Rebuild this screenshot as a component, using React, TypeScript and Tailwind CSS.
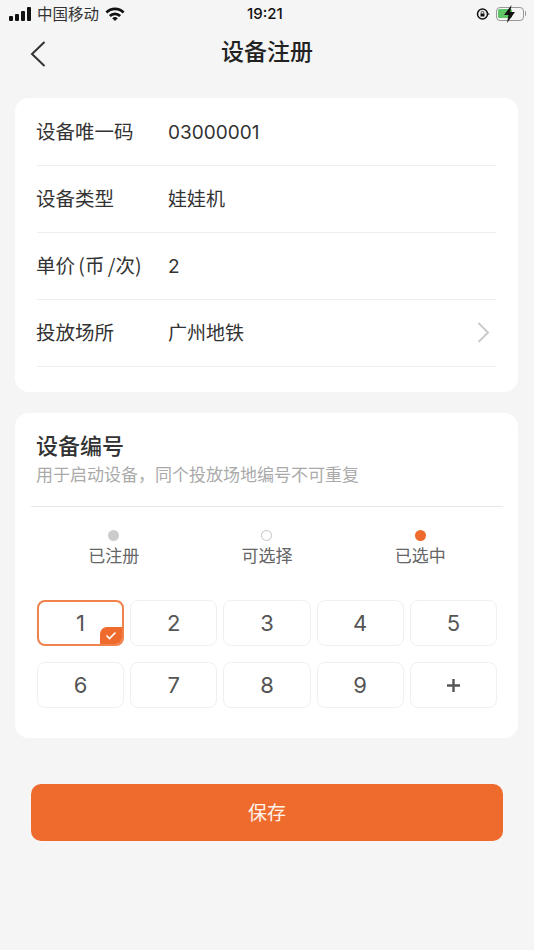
const rows = [
  { label: '设备唯一码', value: '03000001' },
  { label: '设备类型', value: '娃娃机' },
  { label: '单价 (币 /次)', value: '2' },
  { label: '投放场所', value: '广州地铁', arrow: true },
];

const legend = [
  { label: '已注册', dot: 'bg-[#cccccc]' },
  { label: '可选择', dot: 'border border-[#c4c4c4] bg-white' },
  { label: '已选中', dot: 'bg-[#ee6b2d]' },
];

const StatusBar = () => (
  <div className="relative flex h-[27px] items-center pl-[9px] pr-[8px] text-[#222]">
    <div className="flex items-end gap-[2px]">
      <span className="h-[5px] w-[4px] rounded-[1px] bg-[#111]" />
      <span className="h-[7px] w-[4px] rounded-[1px] bg-[#111]" />
      <span className="h-[10px] w-[4px] rounded-[1px] bg-[#111]" />
      <span className="h-[14px] w-[4px] rounded-[1px] bg-[#111]" />
    </div>
    <span className="ml-[6px] text-[15.5px] leading-none text-[#333]">中国移动</span>
    <svg className="ml-[6px]" width="20" height="14" viewBox="0 0 20 14">
      <path d="M0.5 4.5 A13.5 13.5 0 0 1 19.5 4.5 L17.6 6.5 A10.8 10.8 0 0 0 2.4 6.5 Z" fill="#111" />
      <path d="M3.9 8 A8.6 8.6 0 0 1 16.1 8 L14.2 10 A6 6 0 0 0 5.8 10 Z" fill="#111" />
      <path d="M7.2 11.3 A4 4 0 0 1 12.8 11.3 L10 14 Z" fill="#111" />
    </svg>
    <span className="absolute left-[247px] top-[5px] font-['Inter',sans-serif] text-[15px] font-medium leading-[17px] text-[#111]">
      19:21
    </span>
    <div className="ml-auto flex items-center gap-[6px]">
      <svg width="14" height="14" viewBox="0 0 14 14" fill="none">
        <circle cx="6.5" cy="7" r="5" stroke="#111" strokeWidth="1.5" />
        <rect x="4.5" y="6.5" width="4" height="3" fill="#111" />
        <path d="M5.2 6.5 V5.6 a1.3 1.3 0 0 1 2.6 0 V6.5" stroke="#111" strokeWidth="0.8" />
        <path d="M11 5 L14 7.5 H11 Z" fill="#111" />
      </svg>
      <div className="flex items-center">
        <div className="relative h-[14px] w-[28px] rounded-[4px] border border-[#999] p-[1.5px]">
          <div className="h-full w-[14px] rounded-[1.5px] bg-[#5fc465]" />
          <svg className="absolute left-[6px] top-[-3px]" width="13" height="18" viewBox="0 0 13 18">
            <path d="M8.5 0 L1 10 H5.5 L4 18 L12 7 H7.2 Z" fill="#111" />
          </svg>
        </div>
        <span className="ml-[1px] h-[5px] w-[1.5px] rounded-r-sm bg-[#999]" />
      </div>
    </div>
  </div>
);

const NumberCell = ({ n, selected }: { n: number; selected?: boolean }) => (
  <div
    className={`relative flex h-[46px] items-center justify-center overflow-hidden rounded-[8px] bg-white font-['Inter',sans-serif] text-[22px] leading-none text-[#555] ${
      selected ? 'border-2 border-[#f0824c]' : 'border border-[#f0f0f0]'
    }`}
  >
    {n}
    {selected ? (
      <span className="absolute bottom-0 right-0 flex h-[17px] w-[22px] items-center justify-center rounded-tl-[7px] bg-[#ee6b2d]">
        <svg width="12" height="9" viewBox="0 0 12 9" fill="none">
          <path d="M1.5 4.5 L4.5 7.5 L10.5 1.5" stroke="#fff" strokeWidth="1.6" />
        </svg>
      </span>
    ) : null}
  </div>
);

export default function App() {
  return (
    <div className="flex h-[950px] w-[534px] flex-col overflow-hidden bg-[#f5f5f5] font-['Noto_Sans_CJK_SC','Inter',sans-serif]">
      <StatusBar />

      <div className="relative flex h-[54px] items-center justify-center pb-[8px]">
        <svg className="absolute left-[30px] top-[14px]" width="16" height="26" viewBox="0 0 16 26" fill="none">
          <path d="M14.5 1 L2 13 L14.5 25" stroke="#333" strokeWidth="2" />
        </svg>
        <h1 className="text-[23px] font-medium leading-none text-[#222]">设备注册</h1>
      </div>

      <div className="ml-[15px] mr-[16px] mt-[17px] rounded-[14px] bg-white px-[22px] pb-[25px] pt-[1px]">
        {rows.map((row) => (
          <div
            key={row.label}
            className="flex h-[67px] items-center border-b border-[#eeeeee] pb-[2px] text-[#333]"
          >
            <span className="-ml-px w-[132px] shrink-0 text-[19.5px] leading-[24px] [word-spacing:-1px]">
              {row.label}
            </span>
            <span className="flex-1 pt-[3px] font-['Inter','Noto_Sans_CJK_SC',sans-serif] text-[19px] leading-[24px]">
              {row.value}
            </span>
            {row.arrow ? (
              <svg className="mr-[6px]" width="13" height="21" viewBox="0 0 13 21" fill="none">
                <path d="M1.5 1 L11 10.5 L1.5 20" stroke="#c8c8c8" strokeWidth="1.8" />
              </svg>
            ) : null}
          </div>
        ))}
      </div>

      <div className="ml-[15px] mr-[16px] mt-[21px] h-[325px] rounded-[14px] bg-white pl-[16px] pr-[15px] pt-[18px]">
        <div className="border-b border-[#e8e8e8] pb-[20px] pl-[5px]">
          <h2 className="text-[22px] font-medium leading-[26px] text-[#333]">设备编号</h2>
          <p className="mt-[5px] text-[17px] leading-[24px] text-[#aaaaaa]">
            {'用于启动设备\uFF0C同个投放场地编号不可重复'}
          </p>
        </div>

        <div className="mt-[23px] grid grid-cols-3 px-[6px]">
          {legend.map((item) => (
            <div key={item.label} className="flex flex-col items-center">
              <span className={`h-[11px] w-[11px] rounded-full ${item.dot}`} />
              <span className="mt-[2px] text-[17px] leading-[24px] text-[#666]">{item.label}</span>
            </div>
          ))}
        </div>

        <div className="mt-[33px] grid grid-cols-5 gap-x-[6px] gap-y-[16px] px-[6px]">
          {[1, 2, 3, 4, 5, 6, 7, 8, 9].map((n) => (
            <NumberCell key={n} n={n} selected={n === 1} />
          ))}
          <div className="flex h-[46px] items-center justify-center rounded-[8px] border border-[#f0f0f0] bg-white text-[#555]">
            <svg width="15" height="15" viewBox="0 0 15 15" fill="none">
              <path d="M7.5 1 V14 M1 7.5 H14" stroke="#555" strokeWidth="2.4" />
            </svg>
          </div>
        </div>
      </div>

      <button
        type="button"
        className="mx-[31px] mt-[46px] h-[57px] rounded-[10px] bg-[#ee6b2d] text-[19px] text-[#fff3ec]"
      >
        保存
      </button>
    </div>
  );
}
